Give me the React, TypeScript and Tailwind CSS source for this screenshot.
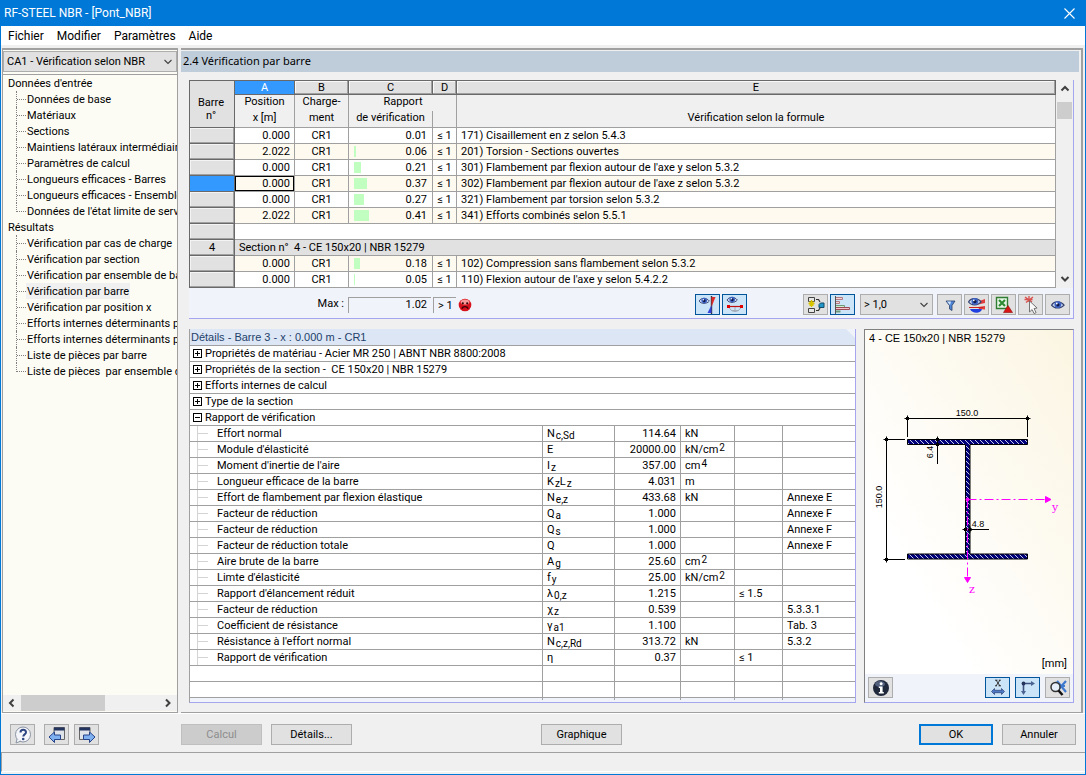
import React from "react";

const UI = "font-['Roboto',sans-serif] text-[11px]";
const GRID = "font-['Roboto',sans-serif] text-[11px]";

const inputItems = [
  "Données de base",
  "Matériaux",
  "Sections",
  "Maintiens latéraux intermédiaire",
  "Paramètres de calcul",
  "Longueurs efficaces - Barres",
  "Longueurs efficaces - Ensemble",
  "Données de l'état limite de serv",
];

const resultItems = [
  "Vérification par cas de charge",
  "Vérification par section",
  "Vérification par ensemble de ba",
  "Vérification par barre",
  "Vérification par position x",
  "Efforts internes déterminants p",
  "Efforts internes déterminants p",
  "Liste de pièces par barre",
  "Liste de pièces  par ensemble d",
];

type Check = { x: string; ratio: number; text: string; tint?: boolean; active?: boolean };

const barre3: Check[] = [
  { x: "0.000", ratio: 0.01, text: "171) Cisaillement en z selon 5.4.3" },
  { x: "2.022", ratio: 0.06, text: "201) Torsion - Sections ouvertes", tint: true },
  { x: "0.000", ratio: 0.21, text: "301) Flambement par flexion autour de l'axe y selon 5.3.2" },
  { x: "0.000", ratio: 0.37, text: "302) Flambement par flexion autour de l'axe z selon 5.3.2", tint: true, active: true },
  { x: "0.000", ratio: 0.27, text: "321) Flambement par torsion selon 5.3.2" },
  { x: "2.022", ratio: 0.41, text: "341) Efforts combinés selon 5.5.1", tint: true },
];

const barre4: Check[] = [
  { x: "0.000", ratio: 0.18, text: "102) Compression sans flambement selon 5.3.2", tint: true },
  { x: "0.000", ratio: 0.05, text: "110) Flexion autour de l'axe y selon 5.4.2.2" },
];

type Detail = {
  label: string;
  sym: [string, string][];
  value: string;
  unit?: string;
  exp?: string;
  limit?: string;
  ref?: string;
};

const groups = [
  "Propriétés de matériau - Acier MR 250 | ABNT NBR 8800:2008",
  "Propriétés de la section -  CE 150x20 | NBR 15279",
  "Efforts internes de calcul",
  "Type de la section",
];

const details: Detail[] = [
  { label: "Effort normal", sym: [["N", "c,Sd"]], value: "114.64", unit: "kN" },
  { label: "Module d'élasticité", sym: [["E", ""]], value: "20000.00", unit: "kN/cm", exp: "2" },
  { label: "Moment d'inertie de l'aire", sym: [["I", "z"]], value: "357.00", unit: "cm", exp: "4" },
  { label: "Longueur efficace de la barre", sym: [["K", "z"], ["L", "z"]], value: "4.031", unit: "m" },
  { label: "Effort de flambement par flexion élastique", sym: [["N", "e,z"]], value: "433.68", unit: "kN", ref: "Annexe E" },
  { label: "Facteur de réduction", sym: [["Q", "a"]], value: "1.000", ref: "Annexe F" },
  { label: "Facteur de réduction", sym: [["Q", "s"]], value: "1.000", ref: "Annexe F" },
  { label: "Facteur de réduction totale", sym: [["Q", ""]], value: "1.000", ref: "Annexe F" },
  { label: "Aire brute de la barre", sym: [["A", "g"]], value: "25.60", unit: "cm", exp: "2" },
  { label: "Limte d'élasticité", sym: [["f", "y"]], value: "25.00", unit: "kN/cm", exp: "2" },
  { label: "Rapport d'élancement réduit", sym: [["λ", "0,z"]], value: "1.215", limit: "≤ 1.5" },
  { label: "Facteur de réduction", sym: [["χ", "z"]], value: "0.539", ref: "5.3.3.1" },
  { label: "Coefficient de résistance", sym: [["γ", "a1"]], value: "1.100", ref: "Tab. 3" },
  { label: "Résistance à l'effort normal", sym: [["N", "c,z,Rd"]], value: "313.72", unit: "kN", ref: "5.3.2" },
  { label: "Rapport de vérification", sym: [["η", ""]], value: "0.37", limit: "≤ 1" },
];

function Chevron({ dir, bold }: { dir: "up" | "down" | "left" | "right"; bold?: boolean }) {
  const d = {
    up: "M1.5 6.5 5 3l3.5 3.5",
    down: "M1.5 3 5 6.5 8.5 3",
    left: "M6.5 1.5 3 5l3.5 3.5",
    right: "M3 1.5 6.5 5 3 8.5",
  }[dir];
  return (
    <svg viewBox="0 0 10 10" className="size-[10px]" fill="none" stroke="#404040" strokeWidth={bold ? 2 : 1.1}>
      <path d={d} />
    </svg>
  );
}

function IconButton({ label, on, children }: { label: string; on?: boolean; children: React.ReactNode }) {
  return (
    <button
      type="button"
      aria-label={label}
      aria-pressed={on}
      className={
        on
          ? "flex h-[21px] w-[25px] items-center justify-center border border-[#00559b] bg-[#cce4f7]"
          : "flex h-[21px] w-[25px] items-center justify-center border border-[#adadad] bg-[#e1e1e1]"
      }
    >
      <svg viewBox="0 0 18 18" className="size-[18px]" fill="none">
        {children}
      </svg>
    </button>
  );
}

function Eye({ x, y, s = 1 }: { x: number; y: number; s?: number }) {
  return (
    <g transform={`translate(${x} ${y}) scale(${s})`}>
      <path d="M0 4.5C2 1 8 0 11.5 4.5 8.5 8 2.5 8 0 4.5Z" fill="#c9d8f4" stroke="#34416f" strokeWidth="1" />
      <circle cx="5.8" cy="4" r="3.1" fill="#3d62c4" />
      <circle cx="5.8" cy="4.2" r="1.5" fill="#101a4a" />
      <circle cx="4.8" cy="3" r=".8" fill="#fff" />
    </g>
  );
}

function Select({ label, options, box }: { label: string; options: string[]; box: string }) {
  return (
    <div className={box}>
      <select
        aria-label={label}
        className="h-full w-full appearance-none truncate rounded-none border border-[#adadad] bg-[#e1e1e1] pt-[2px] pr-4 pb-0 pl-[3px] text-black"
      >
        {options.map((o) => (
          <option key={o}>{o}</option>
        ))}
      </select>
      <span className="pointer-events-none absolute inset-y-0 right-1 flex items-center">
        <Chevron dir="down" />
      </span>
    </div>
  );
}

function TreeGroup({ title, items, current }: { title: string; items: string[]; current?: string }) {
  return (
    <li>
      <a href="#" className="block h-4 pl-[5px] leading-[18px] whitespace-pre">{title}</a>
      <ul>
        {items.map((item, i) => (
          <li key={i} className="flex h-4 pl-[13px]">
            <span
              className={
                i === items.length - 1
                  ? "h-[9px] w-[10px] shrink-0 border-b border-l border-dotted border-[#808080]"
                  : "flex h-4 w-[10px] shrink-0 border-l border-dotted border-[#808080]"
              }
            >
              {i < items.length - 1 && <span className="h-[9px] w-full border-b border-dotted border-[#808080]" />}
            </span>
            <a
              href="#"
              className={
                item === current
                  ? "block h-4 bg-[#f0f0f0] px-[1px] leading-[18px] whitespace-pre"
                  : "block h-4 px-[1px] leading-[18px] whitespace-pre"
              }
            >
              {item}
            </a>
          </li>
        ))}
      </ul>
    </li>
  );
}

const rowHead =
  "border-r border-b border-[#696969] bg-[#e1e1e1] p-0 text-center font-normal shadow-[inset_-1px_-1px_0_#a0a0a0,inset_1px_1px_0_#f4f4f4]";
const cell = "border-r border-b border-[#a0a0a0] p-0";
const letter = "border-r border-b border-[#696969] p-0 font-normal shadow-[inset_-1px_-1px_0_#a0a0a0,inset_1px_1px_0_#f8f8f8]";

function CheckRow({ c }: { c: Check }) {
  return (
    <tr className={c.tint ? "h-4 bg-[#fffaf0]" : "h-4 bg-white"}>
      <th scope="row" className={c.active ? "border-r border-b border-[#696969] bg-[#3399ff] p-0" : rowHead}></th>
      <td
        className={
          c.active
            ? "border-r border-b border-[#a0a0a0] p-0 pr-1 text-right shadow-[inset_0_0_0_1px_#000]"
            : "border-r border-b border-[#a0a0a0] p-0 pr-1 text-right"
        }
      >
        {c.x}
      </td>
      <td className={`${cell} text-center`}>CR1</td>
      <td className={cell}>
        <div className="flex h-[15px] items-center justify-between pr-[5px] pl-[5px]">
          <span className="h-[11px] bg-[#c0ffc0]" style={{ width: Math.floor(c.ratio * 37.1) }} />
          <span>{c.ratio.toFixed(2)}</span>
        </div>
      </td>
      <td className={`${cell} text-center`}>≤ 1</td>
      <td className={`${cell} pl-1 whitespace-nowrap`}>{c.text}</td>
    </tr>
  );
}

function ChecksTable() {
  return (
    <table className="w-full min-w-0 flex-1 table-fixed border-separate border-spacing-0 border-t border-l border-[#696969] leading-[15px]">
      <colgroup>
        <col className="w-[45px]" />
        <col className="w-[60px]" />
        <col className="w-[54px]" />
        <col className="w-[84px]" />
        <col className="w-[24px]" />
        <col />
      </colgroup>
      <thead className="bg-[#f0f0f0]">
        <tr className="h-[14px] bg-[#e1e1e1] leading-[13px]">
          <th rowSpan={3} className="border-r border-b border-[#696969] p-0 pt-[15px] pr-[2px] align-top leading-[13px] font-normal">
            Barre
            <br />
            n°
          </th>
          <th className="border-r border-b border-[#696969] bg-[#3399ff] p-0 font-normal text-white">A</th>
          <th className={letter}>B</th>
          <th className={letter}>C</th>
          <th className={letter}>D</th>
          <th className={letter}>E</th>
        </tr>
        <tr className="h-4 align-top leading-[14px]">
          <th className="border-r border-[#a0a0a0] p-0 font-normal">Position</th>
          <th className="border-r border-[#a0a0a0] p-0 font-normal">Charge-</th>
          <th className="p-0 pl-6 font-normal">Rapport</th>
          <th className="border-r border-[#a0a0a0] p-0"></th>
          <th className="border-r border-[#a0a0a0] p-0"></th>
        </tr>
        <tr className="h-[17px] align-top leading-[14px]">
          <th className={`${cell} font-normal`}>x [m]</th>
          <th className={`${cell} font-normal`}>ment</th>
          <th className={`${cell} font-normal`}>de vérification</th>
          <th className={cell}></th>
          <th className={`${cell} font-normal`}>Vérification selon la formule</th>
        </tr>
      </thead>
      <tbody>
        {barre3.map((c) => (
          <CheckRow key={c.text} c={c} />
        ))}
        <tr className="h-4 bg-white">
          <th className={rowHead}></th>
          <td colSpan={5} className={cell}></td>
        </tr>
        <tr className="h-4 bg-[#e1e1e1]">
          <th scope="row" className={rowHead}>4</th>
          <td colSpan={5} className={`${cell} pl-1 whitespace-pre`}>{"Section n°  4 - CE 150x20 | NBR 15279"}</td>
        </tr>
        {barre4.map((c) => (
          <CheckRow key={c.text} c={c} />
        ))}
      </tbody>
    </table>
  );
}

function ResultsBar() {
  return (
    <div className="flex flex-1 items-center pt-[3px] pr-[3px]">
      <div className={`flex items-center ${UI}`}>
        <label htmlFor="max" className="w-[155px] text-right">Max :</label>
        <input
          id="max"
          readOnly
          value="1.02"
          className="ml-1 h-4 w-[83px] border-t border-l border-[#a0a0a0] bg-[#f0f3f9] pr-1 text-right outline-none"
        />
        <span className="ml-[2px] h-4 w-[23px] border-t border-l border-[#a0a0a0] pl-1 leading-4 whitespace-nowrap">&gt; 1</span>
        <svg viewBox="0 0 14 14" className="ml-[2px] size-[14px]">
          <circle cx="7" cy="7" r="6.3" fill="#d8121c" />
          <ellipse cx="7" cy="4" rx="4.4" ry="2.6" fill="#f59a98" />
          <circle cx="4.8" cy="5.3" r="1.1" fill="#3a0306" />
          <circle cx="9.2" cy="5.3" r="1.1" fill="#3a0306" />
          <path d="M3.8 10.6c1.2-2.6 5.2-2.6 6.4 0" stroke="#3a0306" strokeWidth="1.4" fill="none" />
        </svg>
      </div>
      <div className="ml-auto flex gap-[2px]">
        <IconButton label="Diagramme des rapports" on>
          <Eye x={0} y={1} s={0.9} />
          <path d="M12.5 0v18" stroke="#333" strokeWidth="1.4" />
          <path d="M12.5 1h4L12.5 11Z" fill="#e02a2a" />
          <path d="M12.5 9 8.5 17h4Z" fill="#3344dd" />
        </IconButton>
        <IconButton label="Afficher la barre" on>
          <Eye x={1} y={0} s={0.9} />
          <path d="M3 11c2 6 10 6 12 0M9 11v5M5 14.5h8" stroke="#a4acba" />
          <path d="M2 10.5h14" stroke="#c01010" strokeWidth="1.2" />
          <path d="M1 9h3v3H1zM14 9h3v3h-3z" fill="#e00000" />
        </IconButton>
      </div>
      <div className="ml-14 flex gap-[2px]">
        <IconButton label="Catégories de résultats">
          <path d="M1.5 1.5h6v4h-6zM1.5 12.5h6v4h-6z" fill="#e6e6e6" stroke="#444" />
          <path d="M4.500 4v7M1.500 7.500h6M2.500 5.500l4 4M6.500 5.500l-4 4" stroke="#d8c400" strokeWidth="1.300" />
          <path d="M9 3.5h2.5L13 6M9 14.5h2.5L13 12" stroke="#333" strokeWidth="1.2" />
          <path d="M13.500 7h3.500v4.500h-5v-3z" fill="#2196c8" stroke="#134b66" />
        </IconButton>
        <IconButton label="Barres colorées" on>
          <path d="M1.500 1.500h7v2h-7M1.500 5.500h4v2h-4" stroke="#b07a82" fill="#f6d4d8" />
          <path d="M1.500 9.500h9v2h-9" stroke="#6f9a7a" fill="#c9efd0" />
          <path d="M1.500 11.500h14v2h-14" stroke="#9a4a55" fill="#f6c4cc" />
          <path d="M1.500 15.500h5" stroke="#6f9a7a" strokeWidth="2" />
          <path d="M1.500 0v18" stroke="#555" />
        </IconButton>
      </div>
      <Select label="Filtre des rapports" options={["> 1,0", "Tout"]} box={`relative ml-[5px] h-[21px] w-[73px] ${UI}`} />
      <div className="ml-1 flex gap-[2px]">
        <IconButton label="Filtre">
          <path d="M5 5h9l-3 4.500v5l-2.500-1.500V9.500Z" fill="#4f86d8" stroke="#2b3f66" strokeWidth=".8" />
          <path d="M6 5.500h4L9 9Z" fill="#cfe4ff" />
        </IconButton>
        <IconButton label="Vue colorée">
          <path d="M10 5.5 17 3v4l-7 1.500M10 11l7-1v3.500L11 13" fill="#e23c3c" />
          <path d="M1 11.500h14" stroke="#c22" strokeWidth="1" />
          <path d="M2 13h12c-1 5-10 5-12 0Z" fill="#1f3fe0" />
          <Eye x={0.5} y={1} s={1.1} />
        </IconButton>
        <IconButton label="Exporter vers Excel">
          <path d="M1.500 1.500h11v11h-11z" fill="#e9f6e7" stroke="#2f7d32" strokeWidth="1.400" />
          <path d="M4 4l6 6M10 4 4 10" stroke="#2e8b34" strokeWidth="2.200" />
          <path d="M13 9.500 17.500 16.500h-9Z" fill="#d91414" stroke="#8b0b0b" strokeWidth=".6" />
        </IconButton>
        <IconButton label="Sélectionner">
          <path d="M3 1l7 5M11 1 4 6.500M7 0v6M2.500 3.500h8" stroke="#d9504c" strokeWidth="1.300" />
          <path d="M7.500 5v11l2.600-2.400 2 4 2-1-2-4 3-.6Z" fill="#fafafa" stroke="#666" strokeWidth=".9" />
        </IconButton>
        <IconButton label="Mode d'affichage">
          <Eye x={2.5} y={4.2} s={1.1} />
        </IconButton>
      </div>
    </div>
  );
}

function ToggleBox({ open }: { open?: boolean }) {
  return (
    <svg viewBox="0 0 9 9" className="size-[9px]" fill="none" stroke="#000" shapeRendering="crispEdges">
      <path d="M.5.5h8v8h-8zM2 4.5h5" />
      {!open && <path d="M4.5 2v5" />}
    </svg>
  );
}

function GroupRow({ text, open }: { text: string; open?: boolean }) {
  return (
    <tr className="h-4">
      <td colSpan={6} className="border-b border-[#a0a0a0] p-0">
        <button type="button" aria-expanded={!!open} className="flex h-[15px] items-center gap-[3px] pl-[3px] whitespace-pre">
          <ToggleBox open={open} />
          {text}
        </button>
      </td>
    </tr>
  );
}

function DetailsTable() {
  return (
    <table className="w-full table-fixed border-separate border-spacing-0 border-t border-[#a0a0a0] bg-white leading-[15px]">
      <colgroup>
        <col />
        <col className="w-[72px]" />
        <col className="w-[66px]" />
        <col className="w-[54px]" />
        <col className="w-[48px]" />
        <col className="w-[72px]" />
      </colgroup>
      <tbody>
        {groups.map((g) => (
          <GroupRow key={g} text={g} />
        ))}
        <GroupRow text="Rapport de vérification" open />
        {details.map((d, i) => (
          <tr key={i} className="h-4">
            <td className={cell}>
              <div className="flex h-[15px] pl-[7px]">
                <span className="flex h-full w-[11px] border-l border-[#d4d4d4]">
                  <span className="h-2 w-full border-b border-[#d4d4d4]" />
                </span>
                <span className="pl-[9px]">{d.label}</span>
              </div>
            </td>
            <td className={`${cell} pl-1 whitespace-nowrap`}>
              {d.sym.map(([base, sub], k) => (
                <React.Fragment key={k}>
                  {base}
                  {sub && <sub className="static pl-[1px] align-[-2px] text-[10px]">{sub}</sub>}
                </React.Fragment>
              ))}
            </td>
            <td className={`${cell} pr-1 text-right`}>{d.value}</td>
            <td className={`${cell} pl-1 whitespace-nowrap`}>
              {d.unit}
              {d.exp && <sup className="static pl-[1px] align-[2px] text-[10px]">{d.exp}</sup>}
            </td>
            <td className={`${cell} pl-1`}>{d.limit}</td>
            <td className="border-b border-[#a0a0a0] p-0 pl-1">{d.ref}</td>
          </tr>
        ))}
        {[0, 1].map((r) => (
          <tr key={r} className="h-4">
            {[0, 1, 2, 3, 4].map((k) => (
              <td key={k} className={cell}></td>
            ))}
            <td className="border-b border-[#a0a0a0] p-0"></td>
          </tr>
        ))}
        <tr className="h-[2px] bg-[#f0f3f9]">
          {[0, 1, 2, 3, 4].map((k) => (
            <td key={k} className="border-r border-[#a0a0a0] p-0"></td>
          ))}
          <td className="p-0"></td>
        </tr>
      </tbody>
    </table>
  );
}

function Node({ x, y }: { x: number; y: number }) {
  return (
    <g>
      <circle cx={x} cy={y} r="1.600" fill="#000" stroke="none" />
      <path d={`M${x - 3} ${y}h6M${x} ${y - 3}v6M${x - 1.5} ${y - 1.5}l3 3M${x + 1.5} ${y - 1.5}l-3 3`} />
    </g>
  );
}

function SectionDrawing() {
  return (
    <svg viewBox="0 0 208 260" className="w-full" fill="none" stroke="#000" strokeWidth="1" role="img" aria-label="Section CE 150x20">
      <defs>
        <pattern id="hatch" width="5" height="5" patternUnits="userSpaceOnUse">
          <rect width="5" height="5" fill="#00007a" stroke="none" />
          <path d="M-1-1 6 6M-1 4 1 6M4-1 6 1" stroke="#c8c8e8" strokeWidth="1" />
        </pattern>
      </defs>
      <g transform="translate(0 -18)">
        <path d="M42.500 109.500h120v5h-57.500v109.500h57.500v5h-120v-5h58v-109.500h-58Z" fill="url(#hatch)" />
        <path d="M42.500 88.500h120M42.500 88.500V107M162.500 88.500V107" />
        <Node x={42.5} y={88.5} />
        <Node x={162.5} y={88.5} />
        <path d="M21.500 109.500v120M21.500 109.500H40M21.500 229.500H40" />
        <Node x={21.5} y={109.5} />
        <Node x={21.5} y={229.5} />
        <path d="M72.500 108v26" />
        <Node x={72.5} y={109.5} />
        <Node x={72.5} y={114.5} />
        <path d="M98 199.500h26" />
        <Node x={100.5} y={199.5} />
        <Node x={105} y={199.5} />
        <g stroke="#ff00ff" fill="#ff00ff">
          <path d="M102.500 169.500H181" strokeDasharray="9 3 2 3" />
          <path d="M102.500 169.500V248" strokeDasharray="9 3 2 3" />
          <circle cx="102.500" cy="169.500" r="1.500" />
          <path d="M180.500 166.500 186 169.500 180.500 172.500ZM99.500 247.500h6l-3 5Z" />
        </g>
        <g stroke="none" fill="#000" fontSize="9" fontFamily="Liberation Sans, sans-serif" textAnchor="middle">
          <text x="102" y="86">150.0</text>
          <text x="113" y="197">4.8</text>
          <text transform="translate(17 167) rotate(-90)">150.0</text>
          <text transform="translate(68 122) rotate(-90)">6.4</text>
        </g>
        <g stroke="none" fill="#ff00ff" fontSize="11" fontFamily="DejaVu Serif, serif" textAnchor="middle">
          <text x="190" y="181">y</text>
          <text x="107" y="263">z</text>
        </g>
      </g>
    </svg>
  );
}

function SectionPanel() {
  return (
    <section className="flex w-[210px] shrink-0 flex-col border border-t-[#808080] border-r-[#a6a6ee] border-b-[#a6a6ee] border-l-[#808080] bg-[#f0f3f9]">
      <div className="flex flex-1 flex-col bg-linear-to-tr from-white from-25% to-[#fbf5e2] font-['Liberation_Sans',sans-serif] text-[11px]">
        <h3 className="h-[18px] pl-1 leading-4">4 - CE 150x20 | NBR 15279</h3>
        <SectionDrawing />
        <div className={`mt-auto pr-[6px] pb-1 text-right leading-[13px] ${UI}`}>[mm]</div>
      </div>
      <div className="flex h-[28px] shrink-0 items-center gap-[5px] pr-[3px] pb-[1px] pl-[3px]">
        <IconButton label="Informations">
          <circle cx="9" cy="9" r="8" fill="#20283c" />
          <ellipse cx="8" cy="5" rx="5" ry="3" fill="#52607e" />
          <path d="M9.200 3.200a1.500 1.500 0 1 1-.1 0ZM6.800 7.500h3.800V13h1.200v1.500h-5V13H8V9H6.800Z" fill="#fff" />
        </IconButton>
        <div className="ml-auto flex gap-[5px]">
          <IconButton label="Cotes" on>
            <path d="M7 1l4 6M11 1 7 7M6 1.200h2.500M9.800 1.200h2M6 6.800h2M9.500 6.800h2.500" stroke="#222" strokeWidth=".9" />
            <path d="M2.500 12.500 5.500 9.500v1.800h7V9.500l3 3-3 3v-1.800h-7v1.800Z" fill="#4d78c8" stroke="#2a3f70" strokeWidth=".7" />
          </IconButton>
          <IconButton label="Axes" on>
            <path d="M4.500 4.500h9M4.500 4.500v8" stroke="#3f527f" strokeWidth="1.600" />
            <path d="M12 2 16 4.500 12 7ZM2 12h5l-2.500 4Z" fill="#4a6494" />
            <circle cx="4.500" cy="4.500" r="1.900" fill="#26345c" />
          </IconButton>
          <IconButton label="Zoom">
            <path d="M8 2l9 11M17 2 8 12M9 6l7 1" stroke="#3f78cf" strokeWidth="2.200" />
            <circle cx="6.500" cy="8" r="4.500" fill="#e6eefa" stroke="#333" strokeWidth="1.500" />
            <path d="M9.500 11.500 13.500 16" stroke="#111" strokeWidth="2.500" />
          </IconButton>
        </div>
      </div>
    </section>
  );
}

const pushButton = "h-[21px] border border-[#adadad] bg-[#e1e1e1] leading-[19px] text-black";

export default function App() {
  return (
    <div className={`flex min-h-screen flex-col border border-t-0 border-[#0078d7] bg-[#f0f0f0] text-black ${UI}`}>
      <header className="flex h-[26px] items-center justify-between bg-[#0078d7] pr-[10px] pl-[3px] text-[12px] text-white">
        <h1>RF-STEEL NBR - [Pont_NBR]</h1>
        <button type="button" aria-label="Fermer">
          <svg viewBox="0 0 11 11" className="size-[11px]" stroke="#fff" strokeWidth="1.1">
            <path d="M.5.5l10 10M10.500.5l-10 10" />
          </svg>
        </button>
      </header>
      <nav className="flex h-[19px] items-center gap-[13px] bg-white pl-[7px] text-[12px]">
        {["Fichier", "Modifier", "Paramètres", "Aide"].map((m) => (
          <button key={m} type="button">{m}</button>
        ))}
      </nav>

      <div className="flex flex-1 gap-[3px] pt-[3px] pr-[2px] pl-[1px]">
        <aside className="flex w-[176px] shrink-0 flex-col border border-t-2 border-[#a0a0a0] bg-[#fcfcf4]">
          <Select label="Cas de vérification" options={["CA1 - Vérification selon NBR"]} box="relative mt-[1px] h-[21px] w-full" />
          <div className="mt-[2px] border-t border-[#a0a0a0]" />
          <ul className="min-h-0 flex-1 overflow-hidden">
            <TreeGroup title="Données d'entrée" items={inputItems} />
            <TreeGroup title="Résultats" items={resultItems} current="Vérification par barre" />
          </ul>
          <div className="mb-[1px] flex h-4 items-center bg-[#f0f0f0] px-1">
            <button type="button" aria-label="Défiler à gauche"><Chevron dir="left" bold /></button>
            <div className="mx-1 h-4 flex-1"><div className="h-4 w-[84px] bg-[#cdcdcd]" /></div>
            <button type="button" aria-label="Défiler à droite"><Chevron dir="right" bold /></button>
          </div>
        </aside>

        <main className="flex min-w-0 flex-1 flex-col border-t-2 border-r-2 border-b border-[#a0a0a0]">
          <h2 className="mt-[1px] mr-[2px] h-[21px] bg-[#bfcddb] pl-[2px] font-['Noto_Sans',sans-serif] text-[11px] leading-5">
            2.4 Vérification par barre
          </h2>
          <div className="flex flex-1 flex-col gap-[10px] pt-2 pr-[7px] pb-[9px] pl-2">
            <section className="flex h-[239px] flex-col border-r border-b border-[#a6a6ee] bg-[#f0f3f9]">
              <div className={`flex ${GRID}`}>
                <ChecksTable />
                <div className="flex w-[17px] flex-col items-center justify-between bg-[#f0f0f0] py-1">
                  <button type="button" aria-label="Défiler vers le haut"><Chevron dir="up" bold /></button>
                  <div className="w-[15px] flex-1 pt-2"><div className="h-[17px] bg-[#cdcdcd]" /></div>
                  <button type="button" aria-label="Défiler vers le bas"><Chevron dir="down" bold /></button>
                </div>
              </div>
              <ResultsBar />
            </section>

            <div className="flex flex-1 gap-2">
              <section className={`flex min-w-0 flex-1 flex-col border-r border-b border-l border-r-[#a6a6ee] border-b-[#a6a6ee] border-l-[#a0a0a0] bg-[#f0f3f9] ${GRID}`}>
                <h3 className="h-4 bg-[#dce6f4] pl-[1px] font-['Liberation_Sans',sans-serif] leading-4 text-[#1f3f6b] [clip-path:polygon(0_0,calc(100%-9px)_0,100%_9px,100%_100%,0_100%)]">
                  Détails - Barre 3 - x : 0.000 m - CR1
                </h3>
                <DetailsTable />
              </section>
              <SectionPanel />
            </div>
          </div>
        </main>
      </div>

      <footer>
        <div className="flex items-center border-t border-white px-[9px] pt-[10px] pb-[7px]">
          <div className="flex w-[171px] shrink-0">
            <IconButton label="Aide">
              <circle cx="9" cy="8.500" r="7.500" fill="#f4f6fa" stroke="#8a93a3" />
              <path d="M3 13l-1 4 5-2" fill="#f4f6fa" stroke="#8a93a3" />
              <path d="M6.500 6.500c0-3.500 5.500-3.500 5.500-.3 0 2.200-2.700 2.200-2.700 4.300" stroke="#2d4580" strokeWidth="2" />
              <circle cx="9.200" cy="13" r="1.300" fill="#2d4580" />
            </IconButton>
            <div className="ml-[9px] flex gap-[5px]">
              <IconButton label="Tableau précédent">
                <path d="M6 1.500h10.500v12H6z" fill="#dfe3ea" stroke="#666" />
                <path d="M6 1.500h10.500v3H6z" fill="#23355f" />
                <path d="M1 11 6.500 6v3h6v4.500h-6v3Z" fill="#7fb0f0" stroke="#27438a" />
              </IconButton>
              <IconButton label="Tableau suivant">
                <path d="M1.500 1.500H12v12H1.500z" fill="#dfe3ea" stroke="#666" />
                <path d="M1.500 1.500H12v3H1.500z" fill="#23355f" />
                <path d="M17 11 11.500 6v3h-6v4.500h6v3Z" fill="#7fb0f0" stroke="#27438a" />
              </IconButton>
            </div>
          </div>
          <div className="flex gap-[9px]">
            <button type="button" disabled className="h-[21px] w-[81px] border border-[#bfbfbf] bg-[#cccccc] leading-[19px] text-[#8c8c8c]">Calcul</button>
            <button type="button" className={`${pushButton} w-[81px]`}>Détails...</button>
          </div>
          <button type="button" className={`${pushButton} ml-[189px] w-[81px]`}>Graphique</button>
          <div className="ml-auto flex gap-[9px]">
            <button type="button" className="h-[21px] w-[74px] border-2 border-[#0078d7] bg-[#e1e1e1] leading-[17px]">OK</button>
            <button type="button" className={`${pushButton} w-[74px]`}>Annuler</button>
          </div>
        </div>
        <div className="mb-[2px] h-5 border-t border-b border-l border-t-[#a0a0a0] border-b-white border-l-[#a0a0a0]" />
      </footer>
    </div>
  );
}
